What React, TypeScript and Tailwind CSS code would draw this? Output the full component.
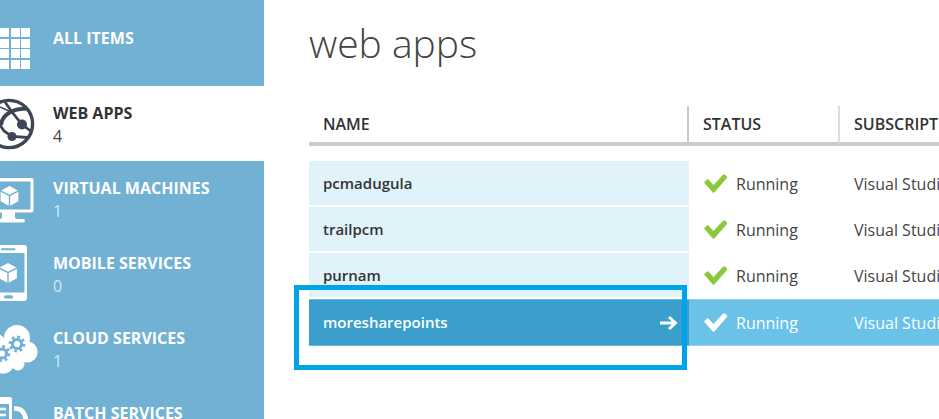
import type { ReactNode } from "react";

function Cube({ x, y }: { x: number; y: number }) {
  return (
    <g transform={`translate(${x} ${y})`} fill="#fff">
      <path d="M0-10 8.3-5.6 0-1.2-8.3-5.6Z" />
      <path d="M-8.9-4.3-.7 0V9.8L-8.9 5.2Z" />
      <path d="M8.9-4.3.7 0V9.8L8.9 5.2Z" />
    </g>
  );
}

function Gear({ x, y }: { x: number; y: number }) {
  return (
    <g transform={`translate(${x} ${y})`} stroke="#71b1d3" fill="none">
      <circle r="4.6" strokeWidth="3" />
      <circle r="7" strokeWidth="2.8" strokeDasharray="2.7 2.8" />
    </g>
  );
}

function Icon({ children }: { children: ReactNode }) {
  return (
    <svg width="40" height="75" viewBox="0 0 40 75" className="shrink-0" aria-hidden="true">
      {children}
    </svg>
  );
}

const gridIcon = (
  <Icon>
    {[17, 28, 38, 49].map((y) =>
      [0, 11, 21].map((x) => <rect key={`${x}-${y}`} x={x} y={y} width="9" height="9" fill="#fff" />),
    )}
  </Icon>
);

const webIcon = (
  <Icon>
    <g fill="none" stroke="#3d4654">
      <circle cx="9" cy="38" r="23.6" strokeWidth="3.4" />
      <path d="M5 16 12 26 22 38.500 32 46" strokeWidth="2.800" />
      <path d="M1 39C2 30 10 23 26 22.500" strokeWidth="4" />
      <path d="M0 39 4 45 12 50.500 28 51.500" strokeWidth="2.800" />
      <path d="M0 21 11 26" strokeWidth="1.500" />
    </g>
    <circle cx="22" cy="38.500" r="5" fill="#3d4654" />
    <circle cx="12" cy="50.500" r="4.500" fill="#3d4654" />
  </Icon>
);

const vmIcon = (
  <Icon>
    <path
      fill="#fff"
      fillRule="evenodd"
      d="M-4 17H31.500Q33.500 17 33.500 19V49Q33.500 51.500 31.500 51.500H15V56Q15 58 18 58H23Q25 58 25 59.700T23 61.500H-4V58H0Q2 58 2 56V51.500H-4ZM-4 20.500V48.500H30.500V20.500Z"
    />
    <Cube x={9.5} y={35} />
  </Icon>
);

const mobileIcon = (
  <Icon>
    <path
      fill="#fff"
      fillRule="evenodd"
      d="M-4 9H24Q27 9 27 12V62Q27 65 24 65H-4ZM-4 17V56.500H24.500V17ZM2 12.300H14.500Q15.500 12.300 15.500 13.300T14.500 14.300H2Q1 14.300 1 13.300T2 12.300ZM5.500 59.300H11.500Q13 59.300 13 60.900T11.500 62.500H5.500Q4 62.500 4 60.900T5.500 59.300Z"
    />
    <Cube x={8} y={37} />
  </Icon>
);

const cloudIcon = (
  <Icon>
    <g fill="#fff">
      <circle cx="17" cy="27" r="13" />
      <circle cx="27" cy="41" r="10.600" />
      <circle cx="18" cy="53" r="6.500" />
      <circle cx="3" cy="51" r="11.500" />
      <circle cx="-6" cy="34" r="12" />
      <rect x="0" y="29" width="24" height="24" />
    </g>
    <Gear x={17} y={33} />
    <Gear x={2} y={42.5} />
  </Icon>
);

const batchIcon = (
  <Icon>
    <path
      fill="#fff"
      fillRule="evenodd"
      d="M-4 11H10Q12 11 12 13V44H-4ZM-4 18V40H9V18Z"
    />
    <path d="M-4 23H6M-4 29H6M-4 35H6" stroke="#fff" strokeWidth="2.500" />
    <path d="M14 22.500Q25 22 26 35" fill="none" stroke="#fff" strokeWidth="4.500" />
  </Icon>
);

const services = [
  { title: "ALL ITEMS", count: "", icon: gridIcon },
  { title: "WEB APPS", count: "4", icon: webIcon, active: true },
  { title: "VIRTUAL MACHINES", count: "1", icon: vmIcon },
  { title: "MOBILE SERVICES", count: "0", icon: mobileIcon },
  { title: "CLOUD SERVICES", count: "1", icon: cloudIcon },
  { title: "BATCH SERVICES", count: "0", icon: batchIcon },
];

const apps = ["pcmadugula", "trailpcm", "purnam", "moresharepoints"];

function Check({ className }: { className: string }) {
  return (
    <svg width="24" height="20" viewBox="0 0 24 20" className={`shrink-0 ${className}`} aria-hidden="true">
      <path d="M0 8.500 3 5.500Q4 5 5 6L9.500 11 19 .8Q20 0 21 .6L23 2.500Q23.600 3.300 23 4L10.500 18.300Q9.500 19.300 8.500 18.300Z" fill="currentColor" />
    </svg>
  );
}

export default function App() {
  return (
    <div className="flex h-screen overflow-hidden bg-white font-['Open_Sans','Noto_Sans',sans-serif] text-[#333]">
      <nav className="w-[264px] shrink-0 overflow-hidden bg-[#71b1d3] pt-[11px]">
        <ul>
          {services.map((s) => (
            <li key={s.title}>
              <a
                href="#"
                className={`flex h-[75px] gap-[13px] ${s.active ? "bg-white text-[#333]" : "text-white"}`}
              >
                {s.icon}
                <span className="flex flex-col pt-[15px]">
                  <span className="text-base leading-6 font-bold whitespace-nowrap">{s.title}</span>
                  <span className={`text-base leading-[22px] ${s.active ? "text-[#444]" : "opacity-70"}`}>{s.count}</span>
                </span>
              </a>
            </li>
          ))}
        </ul>
      </nav>

      <main className="min-w-0 flex-1 overflow-hidden pt-[13px] pl-[45px]">
        <h1 className="text-[39px] leading-[60px] font-light text-[#444]">web apps</h1>
        <table className="mt-[33px] w-full table-fixed border-separate border-spacing-0 text-left text-base whitespace-nowrap">
          <colgroup>
            <col className="w-[380px]" />
            <col className="w-[151px]" />
            <col />
          </colgroup>
          <thead>
            <tr className="h-10 leading-5">
              <th className="border-r-2 border-b-4 border-[#cbcbcb] px-[14px] font-semibold">NAME</th>
              <th className="border-r-2 border-b-4 border-r-[#dcdcdc] border-b-[#cbcbcb] px-[14px] font-semibold">STATUS</th>
              <th className="border-b-4 border-[#cbcbcb] pl-[14px] font-semibold">SUBSCRIPTION</th>
            </tr>
          </thead>
          <tbody>
            <tr aria-hidden="true">
              <td colSpan={3} className="h-[15px] p-0" />
            </tr>
            {apps.map((name) => {
              const selected = name === "moresharepoints";
              return (
                <tr key={name} className={selected ? "h-[47px] bg-[#6ac2e9] text-white" : "h-[46px] text-[#444]"}>
                  <td
                    className={
                      selected
                        ? "relative border-y border-[#6fb8d8] bg-[#3a9fcc] px-[14px] text-[15px] font-semibold"
                        : "border-b-2 border-white bg-[#e0f3fb] px-[14px] text-[15px] font-semibold text-[#333]"
                    }
                  >
                    <div className="flex items-center justify-between">
                      {name}
                      {selected && (
                        <svg width="18" height="16" viewBox="0 0 18 16" className="-mr-[3px]" aria-hidden="true">
                          <path d="M0 8H15M9 2 15.500 8 9 14" fill="none" stroke="#fff" strokeWidth="3" />
                        </svg>
                      )}
                    </div>
                    {selected && (
                      <div className="absolute -top-[15px] right-[2px] -bottom-[25px] -left-[15px] border-[5px] border-[#00a2e8]" />
                    )}
                  </td>
                  <td className={`px-[15px] ${selected ? "border-y border-[#94d3ef]" : ""}`}>
                    <div className="flex items-center gap-2">
                      <Check className={selected ? "text-white" : "text-[#8cc83c]"} />
                      {"Running"}
                    </div>
                  </td>
                  <td className={`pl-[14px] ${selected ? "border-y border-[#94d3ef]" : ""}`}>Visual Studio</td>
                </tr>
              );
            })}
          </tbody>
        </table>
      </main>
    </div>
  );
}
